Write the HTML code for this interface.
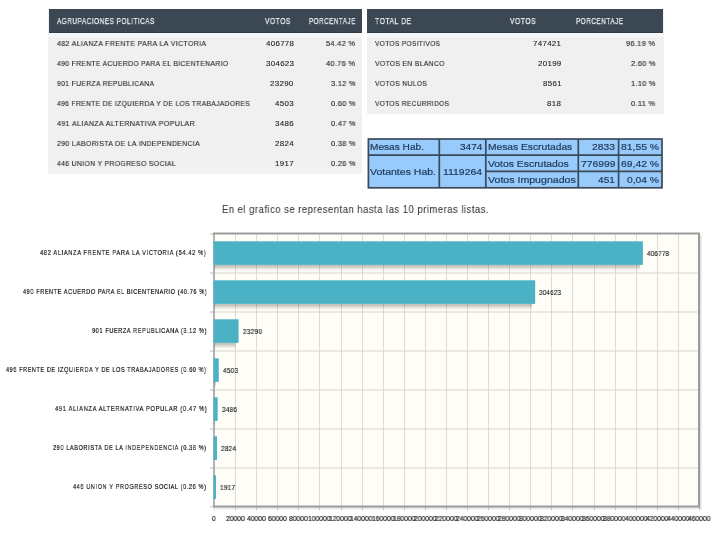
<!DOCTYPE html>
<html><head><meta charset="utf-8">
<style>
html,body{margin:0;padding:0;background:#fff;width:720px;height:536px;overflow:hidden;position:relative;font-family:"Liberation Sans",sans-serif;}
.box{position:absolute;background:#f0f0f0;}
.hdr{position:absolute;background:#3b4853;}
.tx{position:absolute;white-space:nowrap;line-height:20px;height:20px;transform-origin:0 0;will-change:transform;}
.bl{position:absolute;background:#3e4e60;}
svg{position:absolute;left:0;top:0;}
</style></head><body>
<div class="box" style="left:48px;top:9px;width:314px;height:165px"></div>
<div class="hdr" style="left:49px;top:9px;width:313px;height:24px"></div>
<div class="box" style="left:367px;top:9px;width:297px;height:105px"></div>
<div class="hdr" style="left:367px;top:9px;width:296px;height:24px"></div>
<div style="position:absolute;left:49px;top:32px;width:313px;height:1px;background:#303b45"></div>
<div style="position:absolute;left:367px;top:32px;width:296px;height:1px;background:#303b45"></div>
<div style="position:absolute;left:48px;top:33px;width:314px;height:4px;background:#f4f6f8"></div>
<div style="position:absolute;left:367px;top:33px;width:297px;height:4px;background:#f4f6f8"></div>
<div style="position:absolute;left:48px;top:168px;width:314px;height:6px;background:#f3f3f3"></div>
<svg width="720" height="536" viewBox="0 0 720 536" style="position:absolute;left:0;top:0">
<rect x="368" y="139" width="294" height="49" fill="#98cafc"/>
<g stroke="#3a4a5c" stroke-width="1.7" fill="none">
<rect x="368.4" y="139" width="293.6" height="48.8"/>
<line x1="439.3" y1="139" x2="439.3" y2="187.8"/>
<line x1="485.8" y1="139" x2="485.8" y2="187.8"/>
<line x1="578.3" y1="139" x2="578.3" y2="187.8"/>
<line x1="618.6" y1="139" x2="618.6" y2="187.8"/>
<line x1="368.4" y1="155.2" x2="662" y2="155.2"/>
<line x1="485.8" y1="171.4" x2="662" y2="171.4"/>
</g></svg>
<svg width="720" height="536" viewBox="0 0 720 536">
<rect x="214.0" y="233.5" width="485.0" height="273.0" fill="#fefdf7"/>
<line x1="235.5" y1="233.5" x2="235.5" y2="506.5" stroke="#dcdbd5" stroke-width="1"/>
<line x1="256.5" y1="233.5" x2="256.5" y2="506.5" stroke="#dcdbd5" stroke-width="1"/>
<line x1="277.5" y1="233.5" x2="277.5" y2="506.5" stroke="#dcdbd5" stroke-width="1"/>
<line x1="298.5" y1="233.5" x2="298.5" y2="506.5" stroke="#dcdbd5" stroke-width="1"/>
<line x1="319.5" y1="233.5" x2="319.5" y2="506.5" stroke="#dcdbd5" stroke-width="1"/>
<line x1="341.5" y1="233.5" x2="341.5" y2="506.5" stroke="#dcdbd5" stroke-width="1"/>
<line x1="362.5" y1="233.5" x2="362.5" y2="506.5" stroke="#dcdbd5" stroke-width="1"/>
<line x1="383.5" y1="233.5" x2="383.5" y2="506.5" stroke="#dcdbd5" stroke-width="1"/>
<line x1="404.5" y1="233.5" x2="404.5" y2="506.5" stroke="#dcdbd5" stroke-width="1"/>
<line x1="425.5" y1="233.5" x2="425.5" y2="506.5" stroke="#dcdbd5" stroke-width="1"/>
<line x1="446.5" y1="233.5" x2="446.5" y2="506.5" stroke="#dcdbd5" stroke-width="1"/>
<line x1="467.5" y1="233.5" x2="467.5" y2="506.5" stroke="#dcdbd5" stroke-width="1"/>
<line x1="488.5" y1="233.5" x2="488.5" y2="506.5" stroke="#dcdbd5" stroke-width="1"/>
<line x1="509.5" y1="233.5" x2="509.5" y2="506.5" stroke="#dcdbd5" stroke-width="1"/>
<line x1="530.5" y1="233.5" x2="530.5" y2="506.5" stroke="#dcdbd5" stroke-width="1"/>
<line x1="551.5" y1="233.5" x2="551.5" y2="506.5" stroke="#dcdbd5" stroke-width="1"/>
<line x1="572.5" y1="233.5" x2="572.5" y2="506.5" stroke="#dcdbd5" stroke-width="1"/>
<line x1="594.5" y1="233.5" x2="594.5" y2="506.5" stroke="#dcdbd5" stroke-width="1"/>
<line x1="615.5" y1="233.5" x2="615.5" y2="506.5" stroke="#dcdbd5" stroke-width="1"/>
<line x1="636.5" y1="233.5" x2="636.5" y2="506.5" stroke="#dcdbd5" stroke-width="1"/>
<line x1="657.5" y1="233.5" x2="657.5" y2="506.5" stroke="#dcdbd5" stroke-width="1"/>
<line x1="678.5" y1="233.5" x2="678.5" y2="506.5" stroke="#dcdbd5" stroke-width="1"/>
<line x1="214.0" y1="273.00" x2="699.0" y2="273.00" stroke="#d6d5cf" stroke-width="1.1"/>
<line x1="214.0" y1="312.00" x2="699.0" y2="312.00" stroke="#d6d5cf" stroke-width="1.1"/>
<line x1="214.0" y1="351.00" x2="699.0" y2="351.00" stroke="#d6d5cf" stroke-width="1.1"/>
<line x1="214.0" y1="390.00" x2="699.0" y2="390.00" stroke="#d6d5cf" stroke-width="1.1"/>
<line x1="214.0" y1="429.00" x2="699.0" y2="429.00" stroke="#d6d5cf" stroke-width="1.1"/>
<line x1="214.0" y1="468.00" x2="699.0" y2="468.00" stroke="#d6d5cf" stroke-width="1.1"/>
<line x1="214.5" y1="506.5" x2="214.5" y2="510.5" stroke="#cfcfcf" stroke-width="1"/>
<line x1="235.5" y1="506.5" x2="235.5" y2="510.5" stroke="#cfcfcf" stroke-width="1"/>
<line x1="256.5" y1="506.5" x2="256.5" y2="510.5" stroke="#cfcfcf" stroke-width="1"/>
<line x1="277.5" y1="506.5" x2="277.5" y2="510.5" stroke="#cfcfcf" stroke-width="1"/>
<line x1="298.5" y1="506.5" x2="298.5" y2="510.5" stroke="#cfcfcf" stroke-width="1"/>
<line x1="319.5" y1="506.5" x2="319.5" y2="510.5" stroke="#cfcfcf" stroke-width="1"/>
<line x1="341.5" y1="506.5" x2="341.5" y2="510.5" stroke="#cfcfcf" stroke-width="1"/>
<line x1="362.5" y1="506.5" x2="362.5" y2="510.5" stroke="#cfcfcf" stroke-width="1"/>
<line x1="383.5" y1="506.5" x2="383.5" y2="510.5" stroke="#cfcfcf" stroke-width="1"/>
<line x1="404.5" y1="506.5" x2="404.5" y2="510.5" stroke="#cfcfcf" stroke-width="1"/>
<line x1="425.5" y1="506.5" x2="425.5" y2="510.5" stroke="#cfcfcf" stroke-width="1"/>
<line x1="446.5" y1="506.5" x2="446.5" y2="510.5" stroke="#cfcfcf" stroke-width="1"/>
<line x1="467.5" y1="506.5" x2="467.5" y2="510.5" stroke="#cfcfcf" stroke-width="1"/>
<line x1="488.5" y1="506.5" x2="488.5" y2="510.5" stroke="#cfcfcf" stroke-width="1"/>
<line x1="509.5" y1="506.5" x2="509.5" y2="510.5" stroke="#cfcfcf" stroke-width="1"/>
<line x1="530.5" y1="506.5" x2="530.5" y2="510.5" stroke="#cfcfcf" stroke-width="1"/>
<line x1="551.5" y1="506.5" x2="551.5" y2="510.5" stroke="#cfcfcf" stroke-width="1"/>
<line x1="572.5" y1="506.5" x2="572.5" y2="510.5" stroke="#cfcfcf" stroke-width="1"/>
<line x1="594.5" y1="506.5" x2="594.5" y2="510.5" stroke="#cfcfcf" stroke-width="1"/>
<line x1="615.5" y1="506.5" x2="615.5" y2="510.5" stroke="#cfcfcf" stroke-width="1"/>
<line x1="636.5" y1="506.5" x2="636.5" y2="510.5" stroke="#cfcfcf" stroke-width="1"/>
<line x1="657.5" y1="506.5" x2="657.5" y2="510.5" stroke="#cfcfcf" stroke-width="1"/>
<line x1="678.5" y1="506.5" x2="678.5" y2="510.5" stroke="#cfcfcf" stroke-width="1"/>
<line x1="699.5" y1="506.5" x2="699.5" y2="510.5" stroke="#cfcfcf" stroke-width="1"/>
<line x1="210.0" y1="234.00" x2="214.0" y2="234.00" stroke="#c0c0c0" stroke-width="1.1"/>
<line x1="210.0" y1="273.00" x2="214.0" y2="273.00" stroke="#c0c0c0" stroke-width="1.1"/>
<line x1="210.0" y1="312.00" x2="214.0" y2="312.00" stroke="#c0c0c0" stroke-width="1.1"/>
<line x1="210.0" y1="351.00" x2="214.0" y2="351.00" stroke="#c0c0c0" stroke-width="1.1"/>
<line x1="210.0" y1="390.00" x2="214.0" y2="390.00" stroke="#c0c0c0" stroke-width="1.1"/>
<line x1="210.0" y1="429.00" x2="214.0" y2="429.00" stroke="#c0c0c0" stroke-width="1.1"/>
<line x1="210.0" y1="468.00" x2="214.0" y2="468.00" stroke="#c0c0c0" stroke-width="1.1"/>
<line x1="210.0" y1="507.00" x2="214.0" y2="507.00" stroke="#c0c0c0" stroke-width="1.1"/>
<rect x="700.0" y="235.5" width="1" height="273.0" fill="#000" fill-opacity="0.13"/>
<rect x="216.0" y="507.5" width="485.0" height="1" fill="#000" fill-opacity="0.13"/>
<rect x="701.0" y="235.5" width="1" height="274.0" fill="#000" fill-opacity="0.06"/>
<rect x="216.0" y="508.5" width="486.0" height="1" fill="#000" fill-opacity="0.06"/>
<path d="M213.0 233.5 H699.0 V506.5 H213.0" fill="none" stroke="#9c9c9c" stroke-width="2"/>
<line x1="214.0" y1="233.5" x2="214.0" y2="506.5" stroke="#999" stroke-width="1.5"/>
<rect x="214.00" y="264.90" width="425.89" height="1" fill="#3a3230" fill-opacity="0.3"/>
<rect x="214.00" y="265.90" width="425.89" height="1" fill="#3a3230" fill-opacity="0.26"/>
<rect x="214.00" y="266.90" width="425.89" height="1" fill="#3a3230" fill-opacity="0.2"/>
<rect x="214.00" y="267.90" width="425.89" height="1" fill="#3a3230" fill-opacity="0.13"/>
<rect x="214.00" y="268.90" width="425.89" height="1" fill="#3a3230" fill-opacity="0.07"/>
<rect x="214.00" y="269.90" width="425.89" height="1" fill="#3a3230" fill-opacity="0.03"/>
<rect x="213.50" y="241.30" width="429.39" height="23.6" fill="#4bb2c5"/>
<rect x="214.00" y="303.90" width="318.18" height="1" fill="#3a3230" fill-opacity="0.3"/>
<rect x="214.00" y="304.90" width="318.18" height="1" fill="#3a3230" fill-opacity="0.26"/>
<rect x="214.00" y="305.90" width="318.18" height="1" fill="#3a3230" fill-opacity="0.2"/>
<rect x="214.00" y="306.90" width="318.18" height="1" fill="#3a3230" fill-opacity="0.13"/>
<rect x="214.00" y="307.90" width="318.18" height="1" fill="#3a3230" fill-opacity="0.07"/>
<rect x="214.00" y="308.90" width="318.18" height="1" fill="#3a3230" fill-opacity="0.03"/>
<rect x="213.50" y="280.30" width="321.68" height="23.6" fill="#4bb2c5"/>
<rect x="214.00" y="342.90" width="21.56" height="1" fill="#3a3230" fill-opacity="0.3"/>
<rect x="214.00" y="343.90" width="21.56" height="1" fill="#3a3230" fill-opacity="0.26"/>
<rect x="214.00" y="344.90" width="21.56" height="1" fill="#3a3230" fill-opacity="0.2"/>
<rect x="214.00" y="345.90" width="21.56" height="1" fill="#3a3230" fill-opacity="0.13"/>
<rect x="214.00" y="346.90" width="21.56" height="1" fill="#3a3230" fill-opacity="0.07"/>
<rect x="214.00" y="347.90" width="21.56" height="1" fill="#3a3230" fill-opacity="0.03"/>
<rect x="213.50" y="319.30" width="25.06" height="23.6" fill="#4bb2c5"/>
<rect x="214.00" y="381.90" width="1.75" height="1" fill="#3a3230" fill-opacity="0.3"/>
<rect x="214.00" y="382.90" width="1.75" height="1" fill="#3a3230" fill-opacity="0.26"/>
<rect x="214.00" y="383.90" width="1.75" height="1" fill="#3a3230" fill-opacity="0.2"/>
<rect x="214.00" y="384.90" width="1.75" height="1" fill="#3a3230" fill-opacity="0.13"/>
<rect x="214.00" y="385.90" width="1.75" height="1" fill="#3a3230" fill-opacity="0.07"/>
<rect x="214.00" y="386.90" width="1.75" height="1" fill="#3a3230" fill-opacity="0.03"/>
<rect x="213.50" y="358.30" width="5.25" height="23.6" fill="#4bb2c5"/>
<rect x="214.00" y="420.90" width="0.68" height="1" fill="#3a3230" fill-opacity="0.3"/>
<rect x="214.00" y="421.90" width="0.68" height="1" fill="#3a3230" fill-opacity="0.26"/>
<rect x="214.00" y="422.90" width="0.68" height="1" fill="#3a3230" fill-opacity="0.2"/>
<rect x="214.00" y="423.90" width="0.68" height="1" fill="#3a3230" fill-opacity="0.13"/>
<rect x="214.00" y="424.90" width="0.68" height="1" fill="#3a3230" fill-opacity="0.07"/>
<rect x="214.00" y="425.90" width="0.68" height="1" fill="#3a3230" fill-opacity="0.03"/>
<rect x="213.50" y="397.30" width="4.18" height="23.6" fill="#4bb2c5"/>
<rect x="214.00" y="459.90" width="0.00" height="1" fill="#3a3230" fill-opacity="0.3"/>
<rect x="214.00" y="460.90" width="0.00" height="1" fill="#3a3230" fill-opacity="0.26"/>
<rect x="214.00" y="461.90" width="0.00" height="1" fill="#3a3230" fill-opacity="0.2"/>
<rect x="214.00" y="462.90" width="0.00" height="1" fill="#3a3230" fill-opacity="0.13"/>
<rect x="214.00" y="463.90" width="0.00" height="1" fill="#3a3230" fill-opacity="0.07"/>
<rect x="214.00" y="464.90" width="0.00" height="1" fill="#3a3230" fill-opacity="0.03"/>
<rect x="213.50" y="436.30" width="3.48" height="23.6" fill="#4bb2c5"/>
<rect x="214.00" y="498.90" width="0.00" height="1" fill="#3a3230" fill-opacity="0.3"/>
<rect x="214.00" y="499.90" width="0.00" height="1" fill="#3a3230" fill-opacity="0.26"/>
<rect x="214.00" y="500.90" width="0.00" height="1" fill="#3a3230" fill-opacity="0.2"/>
<rect x="214.00" y="501.90" width="0.00" height="1" fill="#3a3230" fill-opacity="0.13"/>
<rect x="214.00" y="502.90" width="0.00" height="1" fill="#3a3230" fill-opacity="0.07"/>
<rect x="214.00" y="503.90" width="0.00" height="1" fill="#3a3230" fill-opacity="0.03"/>
<rect x="213.50" y="475.30" width="2.52" height="23.6" fill="#4bb2c5"/>
</svg>
<div class="tx" style="left:57.40px;top:11.00px;font-size:8.4px;letter-spacing:0.7px;-webkit-text-stroke:0.25px #eef0f2;color:#eef0f2;transform:scaleX(0.7623)">AGRUPACIONES POLITICAS</div>
<div class="tx" style="left:265.30px;top:11.00px;font-size:8.4px;letter-spacing:0.7px;-webkit-text-stroke:0.25px #eef0f2;color:#eef0f2;transform:scaleX(0.7882)">VOTOS</div>
<div class="tx" style="left:308.70px;top:11.00px;font-size:8.4px;letter-spacing:0.7px;-webkit-text-stroke:0.25px #eef0f2;color:#eef0f2;transform:scaleX(0.7469)">PORCENTAJE</div>
<div class="tx" style="left:375.00px;top:11.00px;font-size:8.4px;letter-spacing:0.7px;-webkit-text-stroke:0.25px #eef0f2;color:#eef0f2;transform:scaleX(0.8064)">TOTAL DE</div>
<div class="tx" style="left:510.00px;top:11.00px;font-size:8.4px;letter-spacing:0.7px;-webkit-text-stroke:0.25px #eef0f2;color:#eef0f2;transform:scaleX(0.7976)">VOTOS</div>
<div class="tx" style="left:576.00px;top:11.00px;font-size:8.4px;letter-spacing:0.7px;-webkit-text-stroke:0.25px #eef0f2;color:#eef0f2;transform:scaleX(0.7582)">PORCENTAJE</div>
<div class="tx" style="left:57.00px;top:33.70px;font-size:7.7px;letter-spacing:0.4px;-webkit-text-stroke:0.12px #262626;color:#262626;transform:scaleX(0.9084)">482 ALIANZA FRENTE PARA LA VICTORIA</div>
<div class="tx" style="left:265.50px;top:33.70px;font-size:7.7px;letter-spacing:0.3px;-webkit-text-stroke:0.12px #262626;color:#262626;transform:scaleX(1.0312)">406778</div>
<div class="tx" style="left:326.30px;top:33.70px;font-size:7.7px;letter-spacing:0.3px;-webkit-text-stroke:0.12px #262626;color:#262626;transform:scaleX(0.9663)">54.42 %</div>
<div class="tx" style="left:57.00px;top:53.70px;font-size:7.7px;letter-spacing:0.4px;-webkit-text-stroke:0.12px #262626;color:#262626;transform:scaleX(0.8806)">490 FRENTE ACUERDO PARA EL BICENTENARIO</div>
<div class="tx" style="left:265.50px;top:53.70px;font-size:7.7px;letter-spacing:0.3px;-webkit-text-stroke:0.12px #262626;color:#262626;transform:scaleX(1.0312)">304623</div>
<div class="tx" style="left:326.30px;top:53.70px;font-size:7.7px;letter-spacing:0.3px;-webkit-text-stroke:0.12px #262626;color:#262626;transform:scaleX(0.9663)">40.76 %</div>
<div class="tx" style="left:57.00px;top:73.70px;font-size:7.7px;letter-spacing:0.4px;-webkit-text-stroke:0.12px #262626;color:#262626;transform:scaleX(0.8821)">901 FUERZA REPUBLICANA</div>
<div class="tx" style="left:270.20px;top:73.70px;font-size:7.7px;letter-spacing:0.3px;-webkit-text-stroke:0.12px #262626;color:#262626;transform:scaleX(1.0312)">23290</div>
<div class="tx" style="left:330.72px;top:73.70px;font-size:7.7px;letter-spacing:0.3px;-webkit-text-stroke:0.12px #262626;color:#262626;transform:scaleX(0.9663)">3.12 %</div>
<div class="tx" style="left:57.00px;top:93.70px;font-size:7.7px;letter-spacing:0.4px;-webkit-text-stroke:0.12px #262626;color:#262626;transform:scaleX(0.8730)">496 FRENTE DE IZQUIERDA Y DE LOS TRABAJADORES</div>
<div class="tx" style="left:274.93px;top:93.70px;font-size:7.7px;letter-spacing:0.3px;-webkit-text-stroke:0.12px #262626;color:#262626;transform:scaleX(1.0312)">4503</div>
<div class="tx" style="left:330.72px;top:93.70px;font-size:7.7px;letter-spacing:0.3px;-webkit-text-stroke:0.12px #262626;color:#262626;transform:scaleX(0.9663)">0.60 %</div>
<div class="tx" style="left:57.00px;top:113.70px;font-size:7.7px;letter-spacing:0.4px;-webkit-text-stroke:0.12px #262626;color:#262626;transform:scaleX(0.9239)">491 ALIANZA ALTERNATIVA POPULAR</div>
<div class="tx" style="left:274.93px;top:113.70px;font-size:7.7px;letter-spacing:0.3px;-webkit-text-stroke:0.12px #262626;color:#262626;transform:scaleX(1.0312)">3486</div>
<div class="tx" style="left:330.72px;top:113.70px;font-size:7.7px;letter-spacing:0.3px;-webkit-text-stroke:0.12px #262626;color:#262626;transform:scaleX(0.9663)">0.47 %</div>
<div class="tx" style="left:57.00px;top:133.70px;font-size:7.7px;letter-spacing:0.4px;-webkit-text-stroke:0.12px #262626;color:#262626;transform:scaleX(0.8969)">290 LABORISTA DE LA INDEPENDENCIA</div>
<div class="tx" style="left:274.93px;top:133.70px;font-size:7.7px;letter-spacing:0.3px;-webkit-text-stroke:0.12px #262626;color:#262626;transform:scaleX(1.0312)">2824</div>
<div class="tx" style="left:330.72px;top:133.70px;font-size:7.7px;letter-spacing:0.3px;-webkit-text-stroke:0.12px #262626;color:#262626;transform:scaleX(0.9663)">0.38 %</div>
<div class="tx" style="left:57.00px;top:153.70px;font-size:7.7px;letter-spacing:0.4px;-webkit-text-stroke:0.12px #262626;color:#262626;transform:scaleX(0.8857)">446 UNION Y PROGRESO SOCIAL</div>
<div class="tx" style="left:274.93px;top:153.70px;font-size:7.7px;letter-spacing:0.3px;-webkit-text-stroke:0.12px #262626;color:#262626;transform:scaleX(1.0312)">1917</div>
<div class="tx" style="left:330.72px;top:153.70px;font-size:7.7px;letter-spacing:0.3px;-webkit-text-stroke:0.12px #262626;color:#262626;transform:scaleX(0.9663)">0.26 %</div>
<div class="tx" style="left:374.75px;top:33.80px;font-size:7.7px;letter-spacing:0.4px;-webkit-text-stroke:0.12px #262626;color:#262626;transform:scaleX(0.8552)">VOTOS POSITIVOS</div>
<div class="tx" style="left:533.20px;top:33.80px;font-size:7.7px;letter-spacing:0.3px;-webkit-text-stroke:0.12px #262626;color:#262626;transform:scaleX(1.0312)">747421</div>
<div class="tx" style="left:626.30px;top:33.80px;font-size:7.7px;letter-spacing:0.3px;-webkit-text-stroke:0.12px #262626;color:#262626;transform:scaleX(0.9663)">96.19 %</div>
<div class="tx" style="left:374.75px;top:53.80px;font-size:7.7px;letter-spacing:0.4px;-webkit-text-stroke:0.12px #262626;color:#262626;transform:scaleX(0.8797)">VOTOS EN BLANCO</div>
<div class="tx" style="left:537.90px;top:53.80px;font-size:7.7px;letter-spacing:0.3px;-webkit-text-stroke:0.12px #262626;color:#262626;transform:scaleX(1.0312)">20199</div>
<div class="tx" style="left:630.72px;top:53.80px;font-size:7.7px;letter-spacing:0.3px;-webkit-text-stroke:0.12px #262626;color:#262626;transform:scaleX(0.9663)">2.60 %</div>
<div class="tx" style="left:374.75px;top:73.80px;font-size:7.7px;letter-spacing:0.4px;-webkit-text-stroke:0.12px #262626;color:#262626;transform:scaleX(0.8729)">VOTOS NULOS</div>
<div class="tx" style="left:542.63px;top:73.80px;font-size:7.7px;letter-spacing:0.3px;-webkit-text-stroke:0.12px #262626;color:#262626;transform:scaleX(1.0312)">8561</div>
<div class="tx" style="left:630.72px;top:73.80px;font-size:7.7px;letter-spacing:0.3px;-webkit-text-stroke:0.12px #262626;color:#262626;transform:scaleX(0.9663)">1.10 %</div>
<div class="tx" style="left:374.75px;top:93.80px;font-size:7.7px;letter-spacing:0.4px;-webkit-text-stroke:0.12px #262626;color:#262626;transform:scaleX(0.8551)">VOTOS RECURRIDOS</div>
<div class="tx" style="left:547.35px;top:93.80px;font-size:7.7px;letter-spacing:0.3px;-webkit-text-stroke:0.12px #262626;color:#262626;transform:scaleX(1.0312)">818</div>
<div class="tx" style="left:631.27px;top:93.80px;font-size:7.7px;letter-spacing:0.3px;-webkit-text-stroke:0.12px #262626;color:#262626;transform:scaleX(0.9663)">0.11 %</div>
<div class="tx" style="left:222.40px;top:199.00px;font-size:11.0px;letter-spacing:0.6px;-webkit-text-stroke:0.1px #3a3a3a;color:#3a3a3a;transform:scaleX(0.8564)">En el grafico se representan hasta las 10 primeras listas.</div>
<div class="tx" style="left:369.80px;top:137.30px;font-size:9.6px;-webkit-text-stroke:0.2px #203c5c;color:#203c5c;transform:scaleX(1.0549)">Mesas Hab.</div>
<div class="tx" style="left:459.50px;top:137.30px;font-size:9.6px;-webkit-text-stroke:0.2px #203c5c;color:#203c5c;transform:scaleX(1.0448)">3474</div>
<div class="tx" style="left:487.50px;top:137.30px;font-size:9.6px;-webkit-text-stroke:0.2px #203c5c;color:#203c5c;transform:scaleX(1.0669)">Mesas Escrutadas</div>
<div class="tx" style="left:592.20px;top:137.30px;font-size:9.6px;-webkit-text-stroke:0.2px #203c5c;color:#203c5c;transform:scaleX(1.0776)">2833</div>
<div class="tx" style="left:620.70px;top:137.30px;font-size:9.6px;-webkit-text-stroke:0.2px #203c5c;color:#203c5c;transform:scaleX(1.0818)">81,55 %</div>
<div class="tx" style="left:369.60px;top:161.70px;font-size:9.6px;-webkit-text-stroke:0.2px #203c5c;color:#203c5c;transform:scaleX(1.0949)">Votantes Hab.</div>
<div class="tx" style="left:442.70px;top:161.70px;font-size:9.6px;-webkit-text-stroke:0.2px #203c5c;color:#203c5c;transform:scaleX(1.0880)">1119264</div>
<div class="tx" style="left:487.50px;top:153.60px;font-size:9.6px;-webkit-text-stroke:0.2px #203c5c;color:#203c5c;transform:scaleX(1.0821)">Votos Escrutados</div>
<div class="tx" style="left:580.70px;top:153.60px;font-size:9.6px;-webkit-text-stroke:0.2px #203c5c;color:#203c5c;transform:scaleX(1.0776)">776999</div>
<div class="tx" style="left:620.70px;top:153.60px;font-size:9.6px;-webkit-text-stroke:0.2px #203c5c;color:#203c5c;transform:scaleX(1.0818)">69,42 %</div>
<div class="tx" style="left:487.50px;top:169.80px;font-size:9.6px;-webkit-text-stroke:0.2px #203c5c;color:#203c5c;transform:scaleX(1.1046)">Votos Impugnados</div>
<div class="tx" style="left:598.30px;top:169.80px;font-size:9.6px;-webkit-text-stroke:0.2px #203c5c;color:#203c5c;transform:scaleX(1.0552)">451</div>
<div class="tx" style="left:626.80px;top:169.80px;font-size:9.6px;-webkit-text-stroke:0.2px #203c5c;color:#203c5c;transform:scaleX(1.0711)">0,04 %</div>
<div class="tx" style="left:40.40px;top:243.20px;font-size:8.0px;letter-spacing:0.9px;-webkit-text-stroke:0.2px #111111;color:#111111;transform:scaleX(0.7124)">482 ALIANZA FRENTE PARA LA VICTORIA (54.42 %)</div>
<div class="tx" style="left:647.09px;top:244.00px;font-size:7.4px;letter-spacing:0.3px;-webkit-text-stroke:0.12px #111;color:#111;transform:scaleX(0.8407)">406778</div>
<div class="tx" style="left:22.60px;top:282.20px;font-size:8.0px;letter-spacing:0.9px;-webkit-text-stroke:0.2px #111111;color:#111111;transform:scaleX(0.6892)">490 FRENTE ACUERDO PARA EL BICENTENARIO (40.76 %)</div>
<div class="tx" style="left:539.38px;top:283.00px;font-size:7.4px;letter-spacing:0.3px;-webkit-text-stroke:0.12px #111;color:#111;transform:scaleX(0.8407)">304623</div>
<div class="tx" style="left:91.90px;top:321.20px;font-size:8.0px;letter-spacing:0.9px;-webkit-text-stroke:0.2px #111111;color:#111111;transform:scaleX(0.6934)">901 FUERZA REPUBLICANA (3.12 %)</div>
<div class="tx" style="left:242.76px;top:322.00px;font-size:7.4px;letter-spacing:0.3px;-webkit-text-stroke:0.12px #111;color:#111;transform:scaleX(0.8731)">23290</div>
<div class="tx" style="left:6.20px;top:360.20px;font-size:8.0px;letter-spacing:0.9px;-webkit-text-stroke:0.2px #111111;color:#111111;transform:scaleX(0.6854)">496 FRENTE DE IZQUIERDA Y DE LOS TRABAJADORES (0.60 %)</div>
<div class="tx" style="left:222.95px;top:361.00px;font-size:7.4px;letter-spacing:0.3px;-webkit-text-stroke:0.12px #111;color:#111;transform:scaleX(0.8642)">4503</div>
<div class="tx" style="left:54.50px;top:399.20px;font-size:8.0px;letter-spacing:0.9px;-webkit-text-stroke:0.2px #111111;color:#111111;transform:scaleX(0.7214)">491 ALIANZA ALTERNATIVA POPULAR (0.47 %)</div>
<div class="tx" style="left:221.88px;top:400.00px;font-size:7.4px;letter-spacing:0.3px;-webkit-text-stroke:0.12px #111;color:#111;transform:scaleX(0.8642)">3486</div>
<div class="tx" style="left:53.10px;top:438.20px;font-size:8.0px;letter-spacing:0.9px;-webkit-text-stroke:0.2px #111111;color:#111111;transform:scaleX(0.6919)">290 LABORISTA DE LA INDEPENDENCIA (0.38 %)</div>
<div class="tx" style="left:221.18px;top:439.00px;font-size:7.4px;letter-spacing:0.3px;-webkit-text-stroke:0.12px #111;color:#111;transform:scaleX(0.8642)">2824</div>
<div class="tx" style="left:73.30px;top:477.20px;font-size:8.0px;letter-spacing:0.9px;-webkit-text-stroke:0.2px #111111;color:#111111;transform:scaleX(0.6911)">446 UNION Y PROGRESO SOCIAL (0.26 %)</div>
<div class="tx" style="left:220.22px;top:478.00px;font-size:7.4px;letter-spacing:0.3px;-webkit-text-stroke:0.12px #111;color:#111;transform:scaleX(0.8642)">1917</div>
<div class="tx" style="left:212.25px;top:508.90px;font-size:7.2px;-webkit-text-stroke:0.2px #1e1e1e;color:#1e1e1e;transform:scaleX(0.8750)">0</div>
<div class="tx" style="left:225.69px;top:508.90px;font-size:7.2px;-webkit-text-stroke:0.2px #1e1e1e;color:#1e1e1e;transform:scaleX(0.9400)">20000</div>
<div class="tx" style="left:246.77px;top:508.90px;font-size:7.2px;-webkit-text-stroke:0.2px #1e1e1e;color:#1e1e1e;transform:scaleX(0.9400)">40000</div>
<div class="tx" style="left:267.86px;top:508.90px;font-size:7.2px;-webkit-text-stroke:0.2px #1e1e1e;color:#1e1e1e;transform:scaleX(0.9400)">60000</div>
<div class="tx" style="left:288.95px;top:508.90px;font-size:7.2px;-webkit-text-stroke:0.2px #1e1e1e;color:#1e1e1e;transform:scaleX(0.9400)">80000</div>
<div class="tx" style="left:308.23px;top:508.90px;font-size:7.2px;-webkit-text-stroke:0.2px #1e1e1e;color:#1e1e1e;transform:scaleX(0.9339)">100000</div>
<div class="tx" style="left:329.32px;top:508.90px;font-size:7.2px;-webkit-text-stroke:0.2px #1e1e1e;color:#1e1e1e;transform:scaleX(0.9339)">120000</div>
<div class="tx" style="left:350.41px;top:508.90px;font-size:7.2px;-webkit-text-stroke:0.2px #1e1e1e;color:#1e1e1e;transform:scaleX(0.9339)">140000</div>
<div class="tx" style="left:371.50px;top:508.90px;font-size:7.2px;-webkit-text-stroke:0.2px #1e1e1e;color:#1e1e1e;transform:scaleX(0.9339)">160000</div>
<div class="tx" style="left:392.58px;top:508.90px;font-size:7.2px;-webkit-text-stroke:0.2px #1e1e1e;color:#1e1e1e;transform:scaleX(0.9339)">180000</div>
<div class="tx" style="left:413.67px;top:508.90px;font-size:7.2px;-webkit-text-stroke:0.2px #1e1e1e;color:#1e1e1e;transform:scaleX(0.9339)">200000</div>
<div class="tx" style="left:434.76px;top:508.90px;font-size:7.2px;-webkit-text-stroke:0.2px #1e1e1e;color:#1e1e1e;transform:scaleX(0.9339)">220000</div>
<div class="tx" style="left:455.84px;top:508.90px;font-size:7.2px;-webkit-text-stroke:0.2px #1e1e1e;color:#1e1e1e;transform:scaleX(0.9339)">240000</div>
<div class="tx" style="left:476.93px;top:508.90px;font-size:7.2px;-webkit-text-stroke:0.2px #1e1e1e;color:#1e1e1e;transform:scaleX(0.9339)">260000</div>
<div class="tx" style="left:498.02px;top:508.90px;font-size:7.2px;-webkit-text-stroke:0.2px #1e1e1e;color:#1e1e1e;transform:scaleX(0.9339)">280000</div>
<div class="tx" style="left:519.10px;top:508.90px;font-size:7.2px;-webkit-text-stroke:0.2px #1e1e1e;color:#1e1e1e;transform:scaleX(0.9339)">300000</div>
<div class="tx" style="left:540.19px;top:508.90px;font-size:7.2px;-webkit-text-stroke:0.2px #1e1e1e;color:#1e1e1e;transform:scaleX(0.9339)">320000</div>
<div class="tx" style="left:561.28px;top:508.90px;font-size:7.2px;-webkit-text-stroke:0.2px #1e1e1e;color:#1e1e1e;transform:scaleX(0.9339)">340000</div>
<div class="tx" style="left:582.37px;top:508.90px;font-size:7.2px;-webkit-text-stroke:0.2px #1e1e1e;color:#1e1e1e;transform:scaleX(0.9339)">360000</div>
<div class="tx" style="left:603.45px;top:508.90px;font-size:7.2px;-webkit-text-stroke:0.2px #1e1e1e;color:#1e1e1e;transform:scaleX(0.9339)">380000</div>
<div class="tx" style="left:624.54px;top:508.90px;font-size:7.2px;-webkit-text-stroke:0.2px #1e1e1e;color:#1e1e1e;transform:scaleX(0.9339)">400000</div>
<div class="tx" style="left:645.63px;top:508.90px;font-size:7.2px;-webkit-text-stroke:0.2px #1e1e1e;color:#1e1e1e;transform:scaleX(0.9339)">420000</div>
<div class="tx" style="left:666.71px;top:508.90px;font-size:7.2px;-webkit-text-stroke:0.2px #1e1e1e;color:#1e1e1e;transform:scaleX(0.9339)">440000</div>
<div class="tx" style="left:687.80px;top:508.90px;font-size:7.2px;-webkit-text-stroke:0.2px #1e1e1e;color:#1e1e1e;transform:scaleX(0.9339)">460000</div>
</body></html>
